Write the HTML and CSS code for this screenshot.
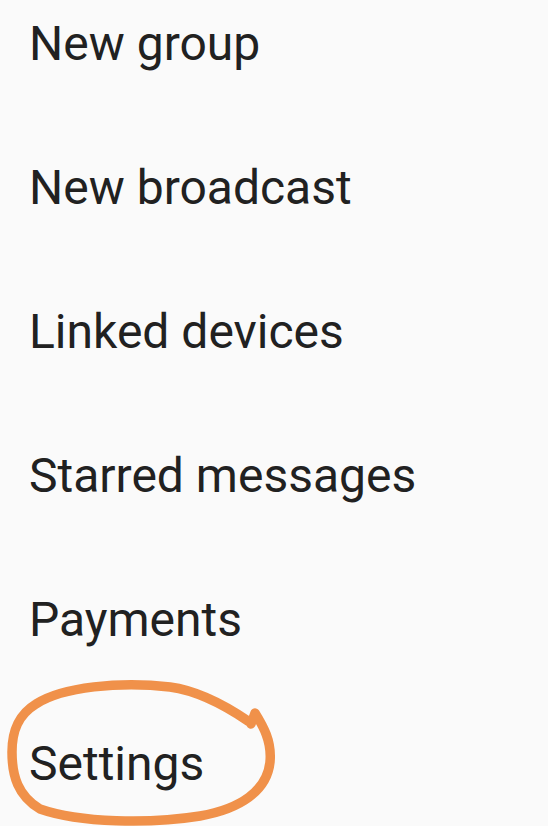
FILE: index.html
```html
<!DOCTYPE html>
<html lang="en">
<head>
    <meta charset="UTF-8">
    <meta name="viewport" content="width=device-width, initial-scale=1.0">
    <title>Menu</title>
    <link rel="stylesheet" href="styles.css">
</head>
<body>

    <ul class="menu">
        <li class="menu-item">New group</li>
        <li class="menu-item">New broadcast</li>
        <li class="menu-item">Linked devices</li>
        <li class="menu-item">Starred messages</li>
        <li class="menu-item">Payments</li>
        <li class="menu-item highlighted">
            Settings
            <svg class="scribble" viewBox="0 0 548 826" aria-hidden="true">
                <path d="M248 721 C226 706, 200 691, 170 687 C120 681, 62 687, 36 704 C18 715, 12 731, 12 752 C12 776, 18 796, 40 809 C80 823, 150 824, 200 816 C240 809, 267 791, 270 762 C272 741, 263 726, 255 713 L251 724"/>
            </svg>
        </li>
    </ul>

</body>
</html>
```

FILE: styles.css
```css
html, body {
    margin: 0;
    background-color: #fafafa;
    height: 100%;
    overflow: hidden;
}
.menu {
    list-style: none;
    margin: -28px 0 0 0;
    padding: 0;
}
.menu-item {
    font-family: Roboto, "Noto Sans", sans-serif;
    font-size: 48px;
    line-height: 144px;
    color: #212121;
    padding-left: 29px;
}
.scribble {
    position: absolute;
    left: 0;
    top: 0;
    width: 548px;
    height: 826px;
    pointer-events: none;
}
.scribble path {
    fill: none;
    stroke: #f0914a;
    stroke-width: 9.5;
    stroke-linecap: round;
    stroke-linejoin: round;
}
```
